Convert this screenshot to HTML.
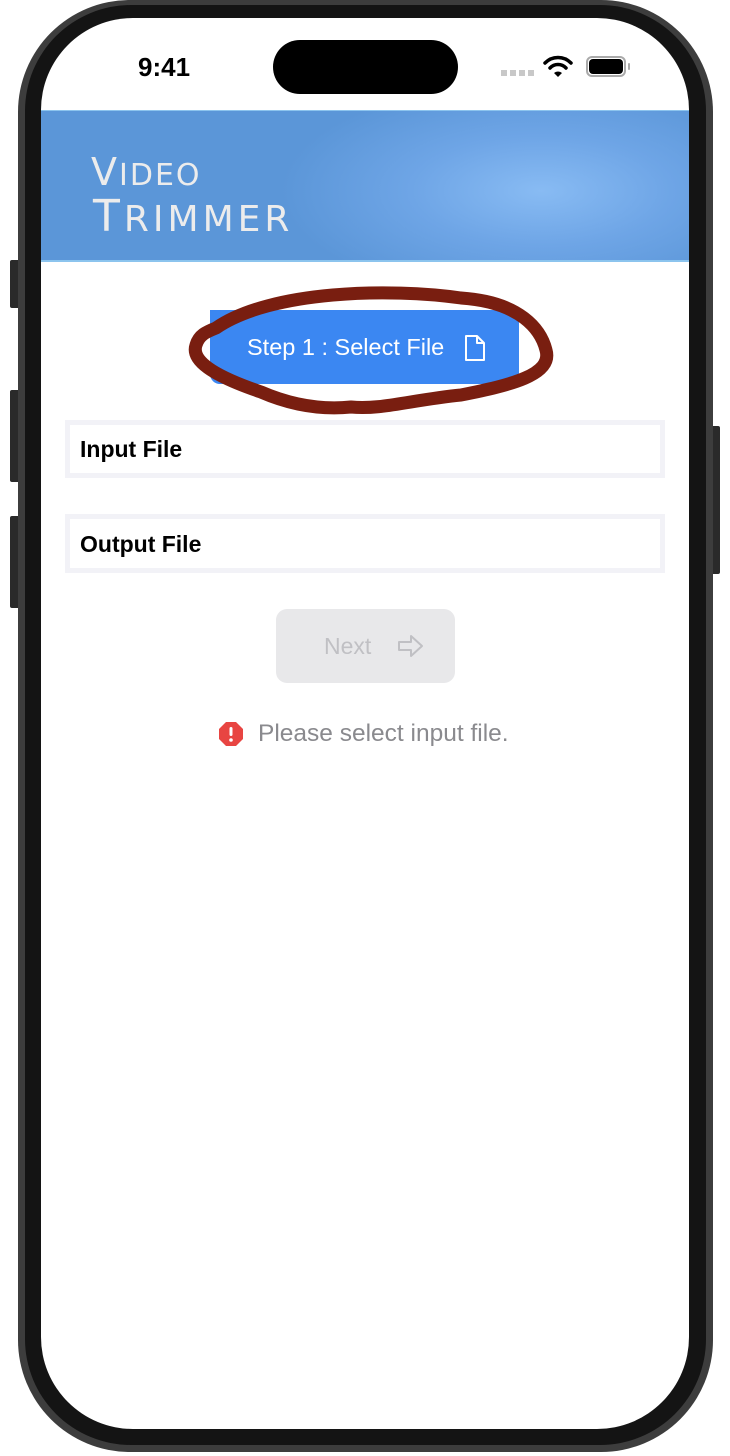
<!DOCTYPE html>
<html><head><meta charset="utf-8"><style>
*{margin:0;padding:0;box-sizing:border-box}
body{width:730px;height:1456px;background:#fff;position:relative;overflow:hidden;font-family:"Liberation Sans",sans-serif}
.abs{position:absolute}
</style></head><body>
<div class="abs" style="left:10px;top:260px;width:10px;height:48px;background:#2a2a2a;border-radius:2px"></div>
<div class="abs" style="left:10px;top:390px;width:10px;height:92px;background:#2a2a2a;border-radius:2px"></div>
<div class="abs" style="left:10px;top:516px;width:10px;height:92px;background:#2a2a2a;border-radius:2px"></div>
<div class="abs" style="left:710px;top:426px;width:10px;height:148px;background:#2a2a2a;border-radius:2px"></div>
<div class="abs" style="left:18px;top:0;width:695px;height:1452px;background:#3d3d3d;border-radius:112px"></div>
<div class="abs" style="left:25px;top:5px;width:681px;height:1440px;background:#141414;border-radius:106px"></div>
<div class="abs" style="left:41px;top:18px;width:648px;height:1411px;background:#fff;border-radius:92px;overflow:hidden">
  <div class="abs" style="left:97px;top:34px;font-size:26px;font-weight:bold;color:#000">9:41</div>
  <div class="abs" style="left:232px;top:22px;width:185px;height:54px;background:#000;border-radius:27px"></div>
  <div class="abs" style="left:460px;top:52px;width:33px;height:6px;background:repeating-linear-gradient(90deg,#c8c8c8 0 6px,transparent 6px 9px)"></div>
  <svg class="abs" style="left:502px;top:36px" width="30" height="24" viewBox="0 0 30 24"><path d="M2 9 A18 18 0 0 1 28 9" stroke="#000" stroke-width="3.5" fill="none" stroke-linecap="round"/><path d="M7 14 A11 11 0 0 1 23 14" stroke="#000" stroke-width="3.5" fill="none" stroke-linecap="round"/><path d="M11 19 L15 23 L19 19 A6 6 0 0 0 11 19Z" fill="#000"/></svg>
  <div class="abs" style="left:545px;top:38px;width:40px;height:21px;border:2px solid #aaa;border-radius:6px"></div>
  <div class="abs" style="left:548px;top:41px;width:34px;height:15px;background:#000;border-radius:4px"></div>
  <div class="abs" style="left:587px;top:45px;width:2px;height:7px;background:#aaa;border-radius:1px"></div>
  <div class="abs" style="left:0;top:92px;width:648px;height:152px;background:radial-gradient(ellipse 260px 110px at 500px 80px,#88bbf3 0%,#6ea5e6 50%,#5b96d8 100%);border-top:1px solid #8cc4ee;border-bottom:2px solid #8cc4ee"></div>
  <div class="abs" style="left:50px;top:134px;color:#ececec;font-family:'DejaVu Sans',sans-serif;font-size:38px;line-height:40px;letter-spacing:2px">V<span style="font-size:30px">IDEO</span></div>
  <div class="abs" style="left:52px;top:176px;color:#ececec;font-family:'DejaVu Sans',sans-serif;font-size:44px;line-height:46px;letter-spacing:4px">T<span style="font-size:36px">RIMMER</span></div>
  <div class="abs" style="left:169px;top:292px;width:309px;height:74px;background:#3b87f2;border-radius:0 0 10px 10px"></div>
  <div class="abs" style="left:206px;top:316px;color:#fff;font-size:23.5px">Step 1 : Select File</div>
  <svg class="abs" style="left:423px;top:316px" width="22" height="28" viewBox="0 0 22 28"><path d="M2 2 H13 L20 9 V26 H2 Z M13 2 V9 H20" stroke="#fff" stroke-width="2" fill="none" stroke-linejoin="round"/></svg>
  <svg class="abs" style="left:0;top:250px" width="648" height="160" viewBox="0 0 648 160"><path d="M175 60 C230 22 350 20 420 30 C480 34 500 62 505 82 C512 107 470 117 420 127 C370 132 340 142 310 139 C280 142 250 137 220 124 C170 107 150 92 155 77 C158 67 165 64 175 60 Z" stroke="#791e10" stroke-width="13" fill="none" stroke-linejoin="round"/></svg>
  <div class="abs" style="left:24px;top:402px;width:600px;height:58px;border:5px solid #f2f2f7"></div>
  <div class="abs" style="left:39px;top:418px;font-size:23px;font-weight:bold;color:#000">Input File</div>
  <div class="abs" style="left:24px;top:496px;width:600px;height:59px;border:5px solid #f2f2f7"></div>
  <div class="abs" style="left:39px;top:513px;font-size:23px;font-weight:bold;color:#000">Output File</div>
  <div class="abs" style="left:235px;top:591px;width:179px;height:74px;background:#e8e8ea;border-radius:11px"></div>
  <div class="abs" style="left:283px;top:615px;font-size:23px;color:#c0c0c4">Next</div>
  <svg class="abs" style="left:356px;top:615px" width="28" height="26" viewBox="0 0 28 26"><path d="M2 9 H14 V3 L25 13 L14 23 V17 H2 Z" stroke="#c0c0c4" stroke-width="2" fill="none" stroke-linejoin="round"/></svg>
  <svg class="abs" style="left:177px;top:703px" width="26" height="26" viewBox="0 0 26 26"><path d="M8 1 H18 L25 8 V18 L18 25 H8 L1 18 V8 Z" fill="#e84542"/><rect x="11.5" y="6" width="3" height="9" rx="1.5" fill="#fff"/><circle cx="13" cy="19" r="1.8" fill="#fff"/></svg>
  <div class="abs" style="left:217px;top:702px;font-size:24.5px;color:#8a8a8e">Please select input file.</div>
</div>
</body></html>
